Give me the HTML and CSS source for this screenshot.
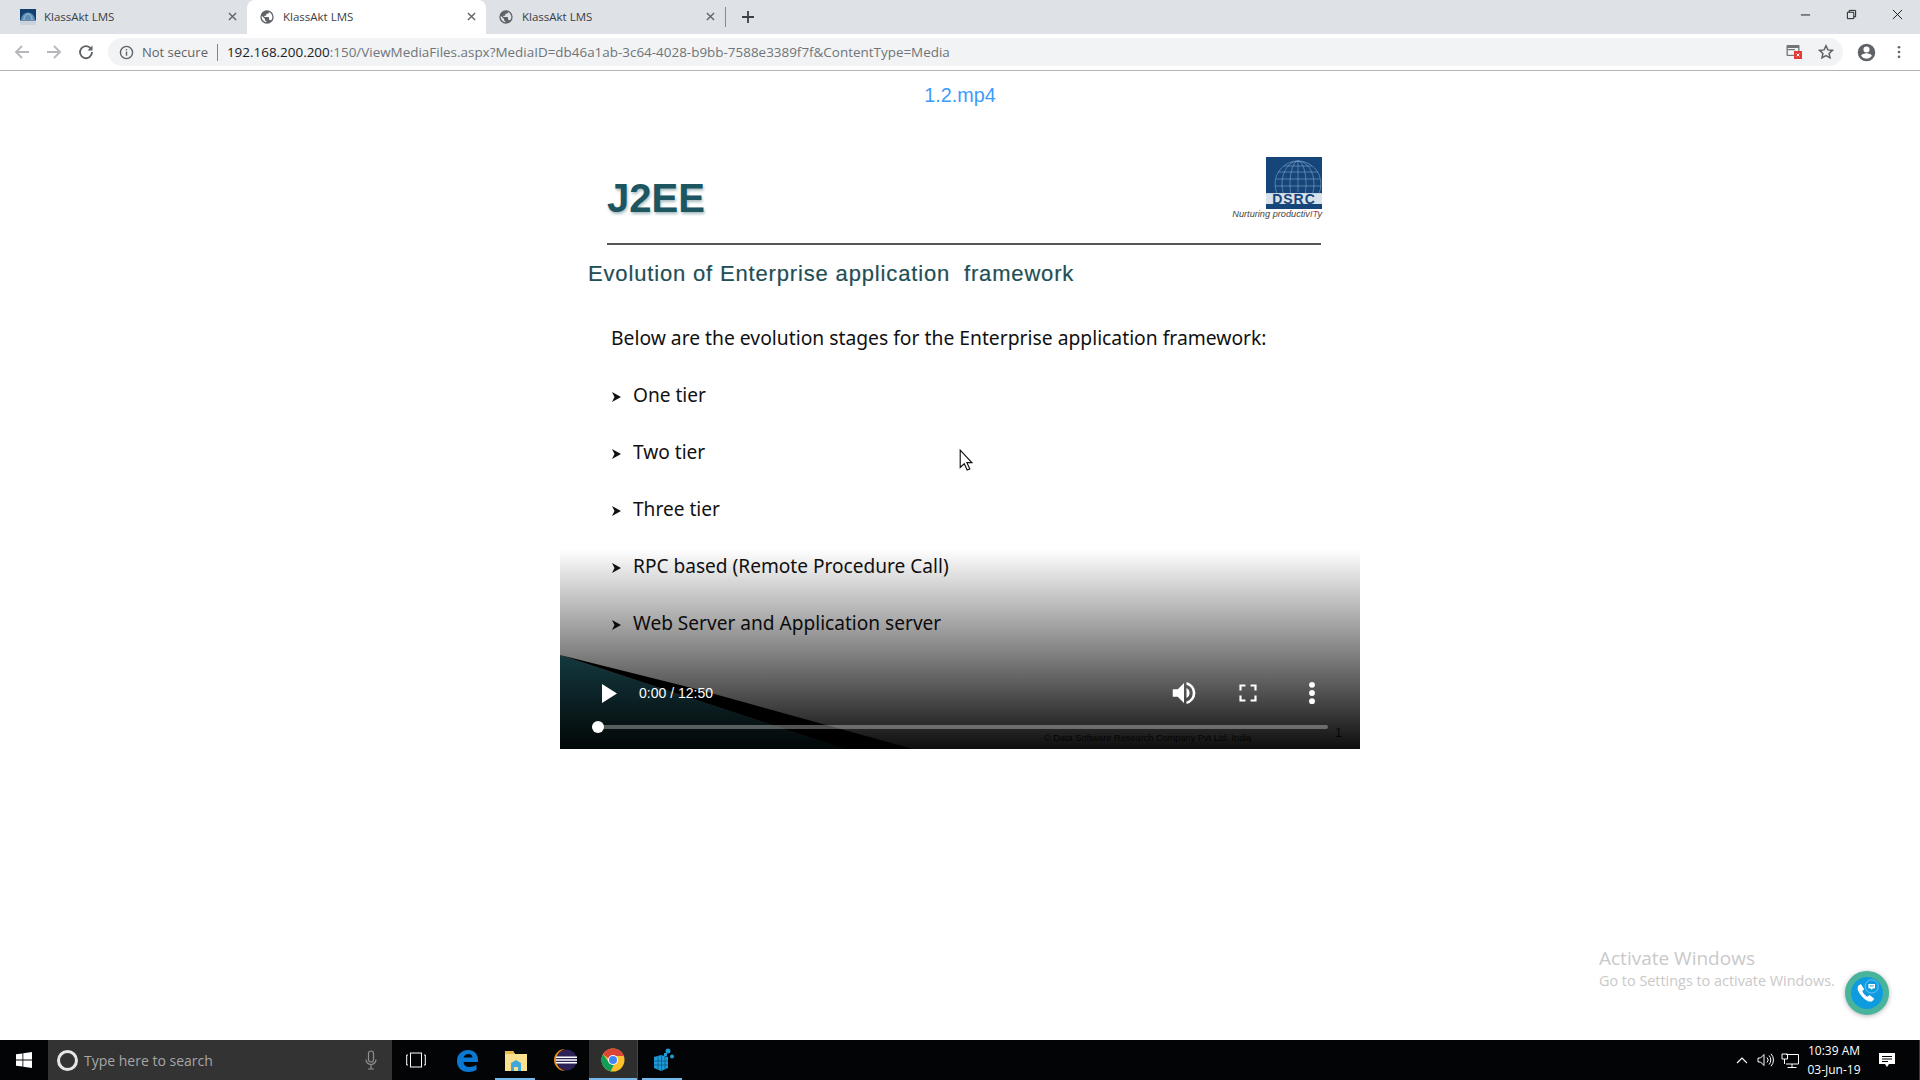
FILE: index.html
```html
<!DOCTYPE html>
<html lang="en">
<head>
<meta charset="utf-8">
<title>KlassAkt LMS</title>
<link rel="stylesheet" href="styles.css">
</head>
<body>
<header class="browser">
  <div class="tabstrip">
    <div class="tab">
      <svg class="favicon" viewBox="0 0 16 16"><rect width="16" height="16" fill="#12406e"/><path d="M1 11a7 7.5 0 0 1 14 0z" fill="#5f8fb5"/><path d="M4 11a4 6 0 0 1 8 0" fill="none" stroke="#b9d0e2" stroke-width=".7"/><rect y="11.5" width="16" height="4.5" fill="#c9d4de"/></svg>
      <span class="tab-title">KlassAkt LMS</span>
      <svg class="tab-x" viewBox="0 0 10 10"><path d="M1 1l8 8M9 1l-8 8"/></svg>
    </div>
    <div class="tab tab-active">
      <svg class="favicon" viewBox="0 0 24 24"><path fill="#5f6368" d="M12 2a10 10 0 1 0 0 20 10 10 0 0 0 0-20zm-1 17.900A8 8 0 0 1 4.200 10.200L9 15v1a2 2 0 0 0 2 2zm6.900-2.500A2 2 0 0 0 16 16h-1v-3a1 1 0 0 0-1-1H8v-2h2a1 1 0 0 0 1-1V7h2a2 2 0 0 0 2-2v-.4a8 8 0 0 1 2.900 12.800z"/></svg>
      <span class="tab-title">KlassAkt LMS</span>
      <svg class="tab-x" viewBox="0 0 10 10"><path d="M1 1l8 8M9 1l-8 8"/></svg>
    </div>
    <div class="tab">
      <svg class="favicon" viewBox="0 0 24 24"><path fill="#5f6368" d="M12 2a10 10 0 1 0 0 20 10 10 0 0 0 0-20zm-1 17.900A8 8 0 0 1 4.200 10.200L9 15v1a2 2 0 0 0 2 2zm6.900-2.500A2 2 0 0 0 16 16h-1v-3a1 1 0 0 0-1-1H8v-2h2a1 1 0 0 0 1-1V7h2a2 2 0 0 0 2-2v-.4a8 8 0 0 1 2.900 12.800z"/></svg>
      <span class="tab-title">KlassAkt LMS</span>
      <svg class="tab-x" viewBox="0 0 10 10"><path d="M1 1l8 8M9 1l-8 8"/></svg>
    </div>
    <span class="tab-sep"></span>
    <svg class="new-tab" viewBox="0 0 12 12"><path d="M6 0v12M0 6h12"/></svg>
    <div class="win-controls">
      <svg class="win-icon" viewBox="0 0 12 12"><path d="M1 6.500h10"/></svg>
      <svg class="win-icon" viewBox="0 0 12 12"><path d="M1.500 3.500h7v7h-7zM3.500 3.500v-2h7v7h-2"/></svg>
      <svg class="win-icon" viewBox="0 0 12 12"><path d="M1 1l10 10M11 1L1 11"/></svg>
    </div>
  </div>
  <div class="toolbar">
    <svg class="nav-icon nav-off" viewBox="0 0 16 16"><path d="M15 8H2M8 2L2 8l6 6"/></svg>
    <svg class="nav-icon nav-off" viewBox="0 0 16 16"><path d="M1 8h13M8 2l6 6-6 6"/></svg>
    <svg class="nav-icon nav-on" viewBox="0 0 16 16"><path d="M13.200 5.200A6 6 0 1 0 14 8"/><path class="nav-fill" d="M14.500 1.500v5h-5z"/></svg>
    <div class="omnibox">
      <svg class="info" viewBox="0 0 16 16"><circle cx="8" cy="8" r="6.500"/><path d="M8 7v4.500M8 4.200v1.400"/></svg>
      <span class="secure">Not secure</span>
      <span class="omni-sep"></span>
      <span class="url"><span class="url-host">192.168.200.200</span>:150/ViewMediaFiles.aspx?MediaID=db46a1ab-3c64-4028-b9bb-7588e3389f7f&amp;ContentType=Media</span>
      <svg class="cast" viewBox="0 0 16 16"><rect x="0.500" y="1" width="13" height="11" rx="1" fill="#70757a"/><rect x="1.800" y="4" width="10.400" height="6.800" fill="#f1f3f4"/><rect x="2" y="5" width="7" height="1.200" fill="#70757a"/><rect x="8" y="7" width="8" height="8" fill="#e53935"/><path d="M10.600 9.600l2.800 2.800M13.400 9.600l-2.800 2.800" stroke="#fff" fill="none"/></svg>
      <svg class="star" viewBox="0 0 16 16"><path d="M8 1.800l1.900 4.100 4.500.5-3.300 3 .9 4.400L8 11.600l-4 2.200.9-4.400-3.300-3 4.500-.5z"/></svg>
    </div>
    <svg class="avatar" viewBox="0 0 24 24"><path fill="#5f6368" d="M12 2a10 10 0 1 0 0 20 10 10 0 0 0 0-20zm0 3a3.500 3.500 0 1 1 0 7 3.500 3.500 0 0 1 0-7zm0 14.200a7.300 7.300 0 0 1-6-3.200c0-2 4-3.100 6-3.100s6 1.100 6 3.100a7.300 7.300 0 0 1-6 3.200z"/></svg>
    <svg class="kebab" viewBox="0 0 4 16"><circle cx="2" cy="2.500" r="1.500"/><circle cx="2" cy="8" r="1.500"/><circle cx="2" cy="13.500" r="1.500"/></svg>
  </div>
</header>

<main class="page">
  <h1 class="file-title">1.2.mp4</h1>
  <section class="video">
    <div class="slide">
      <div class="slide-head">
        <span class="slide-title">J2EE</span>
        <div class="logo">
          <svg class="logo-mark" viewBox="0 0 56 52">
            <rect width="56" height="52" fill="#16457a"/>
            <g fill="none" stroke="#7fa6cc" stroke-width=".6">
              <circle cx="32" cy="27" r="23"/><ellipse cx="32" cy="27" rx="16" ry="23"/><ellipse cx="32" cy="27" rx="8" ry="23"/><path d="M32 4v31"/>
              <path d="M10 22h44M12 15h40M18 9h28M9 29h46"/>
            </g>
            <rect y="36" width="56" height="1" fill="#c6d3e0"/>
            <rect y="37" width="56" height="10" fill="#d8e2ec"/>
            <rect y="47" width="56" height="5" fill="#16457a"/>
            <text class="logo-name" x="28" y="47" text-anchor="middle">DSRC</text>
          </svg>
          <span class="logo-tag">Nurturing productiv<span class="logo-it">IT</span>y</span>
        </div>
      </div>
      <div class="slide-rule"></div>
      <h2 class="slide-heading">Evolution of Enterprise application&nbsp; framework</h2>
      <p class="slide-intro">Below are the evolution stages for the Enterprise application framework:</p>
      <ul class="slide-list">
        <li class="slide-item"><svg class="bullet" viewBox="0 0 9 10"><path d="M0 0l9 5-9 5 2.500-5z"/></svg>One tier</li>
        <li class="slide-item"><svg class="bullet" viewBox="0 0 9 10"><path d="M0 0l9 5-9 5 2.500-5z"/></svg>Two tier</li>
        <li class="slide-item"><svg class="bullet" viewBox="0 0 9 10"><path d="M0 0l9 5-9 5 2.500-5z"/></svg>Three tier</li>
        <li class="slide-item"><svg class="bullet" viewBox="0 0 9 10"><path d="M0 0l9 5-9 5 2.500-5z"/></svg>RPC based (Remote Procedure Call)</li>
        <li class="slide-item"><svg class="bullet" viewBox="0 0 9 10"><path d="M0 0l9 5-9 5 2.500-5z"/></svg>Web Server and Application server</li>
      </ul>
      <svg class="slide-art" viewBox="0 0 800 600"><polygon points="0,506 285,600 0,600" fill="#27727f"/><polygon points="0,506 140,541 353,600 285,600" fill="#000"/></svg>
      <span class="slide-copy">© Data Software Research Company Pvt Ltd, India</span>
      <span class="slide-num">1</span>
    </div>
    <div class="controls">
      <div class="control-row">
        <svg class="ctl-play" viewBox="0 0 15 19"><path d="M0 0l15 9.500L0 19z"/></svg>
        <span class="ctl-time">0:00 / 12:50</span>
        <svg class="ctl-icon ctl-volume" viewBox="0 0 24 24"><path d="M3 9v6h4l5 5V4L7 9z"/><path d="M14 3.200v2.100a7 7 0 0 1 0 13.400v2.100a9 9 0 0 0 0-17.600zM16.500 12A4.500 4.500 0 0 0 14 8v8a4.500 4.500 0 0 0 2.500-4z"/></svg>
        <svg class="ctl-icon ctl-full" viewBox="0 0 28 28"><path d="M4 4h7v2.500H6.500V11H4zM17 4h7v7h-2.500V6.500H17zM4 17h2.500v4.500H11V24H4zM21.500 17H24v7h-7v-2.500h4.500z"/></svg>
        <svg class="ctl-icon ctl-more" viewBox="0 0 24 24"><circle cx="12" cy="5" r="2.500"/><circle cx="12" cy="12" r="2.500"/><circle cx="12" cy="19" r="2.500"/></svg>
      </div>
      <div class="scrubber"><span class="scrub-thumb"></span></div>
    </div>
  </section>
  <svg class="cursor" viewBox="0 0 12 19"><path d="M1 1v15l3.500-3.300 2.500 5.500 2.300-1-2.500-5.400H11z"/></svg>
</main>

<div class="watermark">
  <span class="wm-big">Activate Windows</span>
  <span class="wm-small">Go to Settings to activate Windows.</span>
</div>

<div class="call-btn">
  <svg class="call-icon" viewBox="0 0 34 34">
    <path fill="#fff" d="M7.500 9.500l3-2 3.500 5.500-2 2c.8 2.500 3 5 5.500 6l2.200-1.800 5 3.800-2.200 2.800c-2 .8-5 0-8.500-2.800-3.500-3-6.500-7-7-10.500z"/>
    <circle cx="22" cy="10" r="7" fill="none" stroke="#9dd3f2" stroke-width=".7"/>
    <path fill="#fff" d="M18.500 7.500h7v4.500h-2l-1.500 1.500-1.500-1.500h-2z"/>
    <path stroke="#0f9be0" d="M19.800 9.500h4.400"/>
  </svg>
</div>

<footer class="taskbar">
  <div class="start"><svg class="win-logo" viewBox="0 0 16 16"><path d="M0 2.300l6.500-.9v6.200H0zM7.300 1.300L16 0v7.600H7.300zM0 8.400h6.500v6.200L0 13.700zM7.300 8.400H16V16l-8.700-1.300z"/></svg></div>
  <div class="search">
    <span class="cortana"></span>
    <span class="search-text">Type here to search</span>
    <svg class="mic" viewBox="0 0 12 20"><rect x="3.500" y="1" width="5" height="11" rx="2.500"/><path d="M1 9.500a5 5 0 0 0 10 0M6 14.500V19M3 19h6"/></svg>
  </div>
  <div class="task-slot task-view"><svg class="tv-icon" viewBox="0 0 20 16"><rect x="4.500" y="1" width="11" height="14"/><path d="M2 3H.7v10H2M18 3h1.300v10H18"/></svg></div>
  <div class="task-slot"><svg class="app-icon" viewBox="0 0 24 24"><path fill="#0b78d4" d="M2 13C2 6 7 2 13 2c6 0 10 4 10 10v2H8.500c.3 3 2.500 5 6 5 2.500 0 5-.8 7-2v5c-2 1.200-5 2-8 2C6.500 24 2 19.500 2 13zm6.500-3.500h9C17.300 7 15.800 6 13.500 6c-2.400 0-4.300 1.300-5 3.500z"/></svg></div>
  <div class="task-slot task-running"><svg class="app-icon" viewBox="0 0 24 24"><path fill="#f9e08f" d="M1 3h8l2 3h12v17H1z"/><path fill="#e9b949" d="M1 3h8l2 3H1z"/><path fill="#3fa7dc" d="M7 23v-8l5-3 5 3v8h-3v-4h-4v4z"/></svg></div>
  <div class="task-slot"><svg class="app-icon" viewBox="0 0 24 24"><path fill="#e98b13" d="M12 1a11 11 0 0 0 0 22A11.500 11.500 0 0 1 12 1z"/><circle cx="13.500" cy="12" r="10.500" fill="#2c2255"/><path fill="#fff" d="M3 8.500h21v1.600H3zM3 11.200h21v1.600H3zM3 13.900h21v1.600H3z"/></svg></div>
  <div class="task-slot task-active"><svg class="app-icon" viewBox="0 0 24 24"><circle cx="12" cy="12" r="11.500" fill="#fbc02d"/><path fill="#db4437" d="M2 6.300A11.500 11.500 0 0 1 22.800 8H12a4.200 4.200 0 0 0-4 3z"/><path fill="#0f9d58" d="M2 6.300l6 8.500a4.300 4.300 0 0 0 5.200 1.300l-3.500 7.200A11.500 11.500 0 0 1 2 6.300z"/><circle cx="12" cy="12" r="5" fill="#fff"/><circle cx="12" cy="12" r="4" fill="#4285f4"/></svg></div>
  <div class="task-slot task-running task-last"><svg class="app-icon" viewBox="0 0 24 24"><g fill="#1e9ad6"><path d="M3 9l7-2 7 2v11l-7 3-7-3z"/><circle cx="17" cy="3" r="2.500"/><circle cx="21" cy="8.500" r="2"/><rect x="13" y="5" width="3" height="3"/></g><path stroke="#0b5a8a" stroke-width=".8" d="M7 8v14M10.500 7v16M14 8v14M3 13l14 0M3 17l14 0"/></svg></div>
  <div class="tray">
    <svg class="tray-caret" viewBox="0 0 12 7"><path d="M1 6l5-5 5 5"/></svg>
    <svg class="tray-sound" viewBox="0 0 18 14"><path d="M1 5v4h2.500L7 12.500v-11L3.500 5zM10 4.500a3.500 3.500 0 0 1 0 5M12 2.500a6.500 6.500 0 0 1 0 9M14 .8a9 9 0 0 1 0 12.400"/></svg>
    <svg class="tray-net" viewBox="0 0 18 15"><path d="M5 1.500h12.500v9.500H5M1 1h5.500v5H1zM3.500 6v5M11 11v3M6.500 14.500h9"/></svg>
    <div class="clock"><span>10:39 AM</span><span>03-Jun-19</span></div>
    <svg class="tray-note" viewBox="0 0 16 15"><path d="M0 0h16v11h-6l-2 3-2-3H0z"/><path stroke="#000" d="M3 3.500h10M3 6h10M3 8.500h6"/></svg>
  </div>
</footer>
</body>
</html>
```

FILE: styles.css
```css
* { box-sizing: border-box; margin: 0; padding: 0; }
html, body { height: 100%; }
body { width: 1920px; height: 1080px; overflow: hidden; display: flex; flex-direction: column; background: #fff; font-family: "Open Sans", sans-serif; position: relative; }

.browser { flex: none; height: 71px; display: flex; flex-direction: column; border-bottom: 1px solid #b4b4b4; }
.tabstrip { height: 34px; background: #dee1e6; display: flex; align-items: center; padding-left: 8px; }
.tab { width: 239px; height: 34px; display: flex; align-items: center; padding: 0 10px 1px 12px; color: #3c4043; font-size: 11.5px; }
.tab-active { background: #fff; border-radius: 8px 8px 0 0; }
.favicon { width: 16px; height: 16px; flex: none; margin-right: 8px; }
.tab-title { flex: 1; white-space: nowrap; }
.tab-x { width: 9px; height: 9px; fill: none; stroke: #5f6368; stroke-width: 1.5; }
.tab-sep { width: 1px; height: 20px; background: #888; margin-left: 0; }
.new-tab { width: 12px; height: 12px; margin-left: 16px; fill: none; stroke: #3c4043; stroke-width: 1.8; }
.win-controls { margin-left: auto; display: flex; gap: 35px; padding: 0 17px 6px 0; }
.win-icon { width: 11px; height: 11px; fill: none; stroke: #111; stroke-width: 1; overflow: visible; }

.toolbar { height: 36px; background: #fff; display: flex; align-items: center; padding: 0 0 0 14px; }
.nav-icon { width: 16px; height: 16px; fill: none; stroke-width: 1.8; margin-right: 16px; flex: none; }
.nav-off { stroke: #b5b7ba; }
.nav-on { stroke: #5f6368; margin-right: 14px; }
.nav-fill { fill: #5f6368; stroke: none; }
.omnibox { width: 1735px; height: 28px; background: #f1f3f4; border-radius: 14px; display: flex; align-items: center; padding: 0 9px 0 11px; color: #5f6368; font-size: 13px; flex: none; }
.info { width: 15px; height: 15px; fill: none; stroke: #5f6368; stroke-width: 1.5; margin-right: 8px; flex: none; }
.secure { white-space: nowrap; }
.omni-sep { width: 1px; height: 17px; background: #80868b; margin: 0 9px; }
.url { white-space: nowrap; color: #70757a; flex: 1; font-size: 13.45px; }
.url-host { color: #202124; }
.cast { width: 16px; height: 16px; margin-right: 16px; }
.star { width: 16px; height: 16px; fill: none; stroke: #5f6368; stroke-width: 1.5; }
.avatar { width: 21px; height: 21px; margin-left: 13px; flex: none; }
.kebab { width: 4px; height: 14px; margin-left: 20px; fill: #5f6368; flex: none; }

.page { flex: 1; display: flex; flex-direction: column; align-items: center; position: relative; }
.file-title { font: 400 19.8px/24px "Liberation Sans", sans-serif; color: #3d9bfb; margin-top: 12px; }
.video { width: 800px; height: 600px; margin-top: 42px; position: relative; overflow: hidden; }
.slide { width: 100%; height: 100%; position: relative; display: flex; flex-direction: column; }
.slide-head { display: flex; justify-content: space-between; align-items: flex-start; padding: 8px 38px 0 47px; height: 94px; }
.slide-title { font: 700 40px/46px "Liberation Sans", sans-serif; color: #1d5560; text-shadow: 1px 2px 3px #a9bcc0; margin-top: 18px; }
.logo { display: flex; flex-direction: column; align-items: flex-end; width: 92px; }
.logo-mark { width: 56px; height: 52px; display: block; }
.logo-name { font: 700 14px "Liberation Sans", sans-serif; fill: #16457a; letter-spacing: 1px; }
.logo-tag { font: italic 9.2px/10px "Liberation Sans", sans-serif; color: #444; white-space: nowrap; }
.logo-it { color: #c0392b; }
.slide-rule { height: 2px; background: #555; margin: 0 39px 0 47px; }
.slide-heading { font: 400 22px/26px "Liberation Sans", sans-serif; color: #1f4f55; letter-spacing: .84px; -webkit-text-stroke: .2px #1f4f55; margin: 16px 0 0 28px; white-space: pre; }
.slide-intro { font: 400 19.3px/28px "Noto Sans", sans-serif; color: #111; margin: 37px 0 0 51px; white-space: nowrap; }
.slide-list { list-style: none; margin: 29px 0 0 52px; display: flex; flex-direction: column; gap: 29px; }
.slide-item { display: flex; align-items: center; font: 400 19.1px/28px "Noto Sans", sans-serif; color: #111; white-space: nowrap; }
.bullet { width: 9px; height: 10px; margin: 3px 12px 0 0; fill: #111; }
.slide-art { position: absolute; left: 0; top: 0; width: 800px; height: 600px; }
.slide-copy { position: absolute; left: 484px; top: 584px; font: 9.2px "Liberation Sans", sans-serif; color: #2a2a2a; white-space: nowrap; }
.slide-num { position: absolute; left: 775px; top: 576px; font: 13px "Liberation Sans", sans-serif; color: #333; }

.controls { position: absolute; left: 0; right: 0; bottom: 0; height: 200px; background: linear-gradient(to bottom, rgba(0,0,0,0) 0%, rgba(0,0,0,.95) 100%); display: flex; flex-direction: column; justify-content: flex-end; padding: 0 32px 0 32px; }
.control-row { display: flex; align-items: center; height: 24px; margin-bottom: 20px; padding-left: 10px; }
.ctl-play { width: 15px; height: 19px; fill: #fff; flex: none; }
.ctl-time { font: 14px "Liberation Sans", sans-serif; color: #fff; margin-left: 22px; white-space: nowrap; flex: 1; }
.ctl-icon { width: 28px; height: 28px; fill: #fff; flex: none; }
.ctl-volume { width: 30px; height: 30px; }
.ctl-full { width: 24px; height: 24px; margin-left: 37px; }
.ctl-more { margin-left: 38px; margin-right: 2px; }
.scrubber { height: 4px; background: rgba(255,255,255,.32); border-radius: 2px; margin-bottom: 20px; position: relative; }
.scrub-thumb { position: absolute; left: 0; top: -4px; width: 12px; height: 12px; border-radius: 50%; background: #fff; }
.cursor { position: absolute; left: 959px; top: 378px; width: 14px; height: 22px; fill: #fff; stroke: #111; stroke-width: 1; }

.watermark { position: absolute; left: 1599px; top: 945px; display: flex; flex-direction: column; color: #c9c9c9; font-family: "Open Sans", sans-serif; }
.wm-big { font-size: 19px; line-height: 26px; }
.wm-small { font-size: 14.4px; line-height: 20px; }
.call-btn { position: absolute; left: 1845px; top: 971px; width: 44px; height: 44px; border-radius: 50%; background: #0f9be0; border: 6px solid #49b49c; box-shadow: 0 1px 5px rgba(0,0,0,.3); display: flex; align-items: center; justify-content: center; }
.call-icon { width: 32px; height: 32px; flex: none; }

.taskbar { flex: none; height: 40px; background: #020406; display: flex; align-items: stretch; color: #fff; }
.start { width: 48px; display: flex; align-items: center; justify-content: center; }
.win-logo { width: 16px; height: 16px; fill: #fff; }
.search { width: 344px; background: #333; display: flex; align-items: center; padding-left: 9px; color: #a6a6a6; }
.cortana { width: 21px; height: 21px; border: 3px solid #e6e6e6; border-radius: 50%; flex: none; }
.search-text { font-size: 14px; margin-left: 6px; flex: 1; white-space: nowrap; }
.mic { width: 12px; height: 20px; fill: none; stroke: #8f8f8f; stroke-width: 1.2; margin-right: 15px; }
.task-slot { width: 49px; display: flex; align-items: center; justify-content: center; position: relative; }
.task-view { width: 50px; }
.tv-icon { width: 20px; height: 16px; fill: none; stroke: #fff; stroke-width: 1; margin-right: 3px; }
.app-icon { width: 24px; height: 24px; }
.task-running::after, .task-active::after { content: ""; position: absolute; bottom: 0; left: 4px; right: 5px; height: 2px; background: #76b9ed; }
.task-active { background: #2e2e2e; border-right: 1px solid #444; }
.task-active::after { left: 0; right: 0; }
.tray { margin-left: auto; display: flex; align-items: center; padding-right: 24px; border-right: 1px solid #3a3a3a; }
.tray-caret { width: 12px; height: 7px; fill: none; stroke: #fff; stroke-width: 1.2; }
.tray-sound { width: 18px; height: 14px; fill: none; stroke: #fff; stroke-width: 1; margin-left: 9px; }
.tray-net { width: 18px; height: 15px; fill: none; stroke: #fff; stroke-width: 1; margin-left: 6px; }
.clock { display: flex; flex-direction: column; align-items: center; width: 58px; margin-left: 6px; font-size: 12px; line-height: 19px; }
.tray-note { width: 16px; height: 15px; fill: #fff; margin-left: 16px; }
```
